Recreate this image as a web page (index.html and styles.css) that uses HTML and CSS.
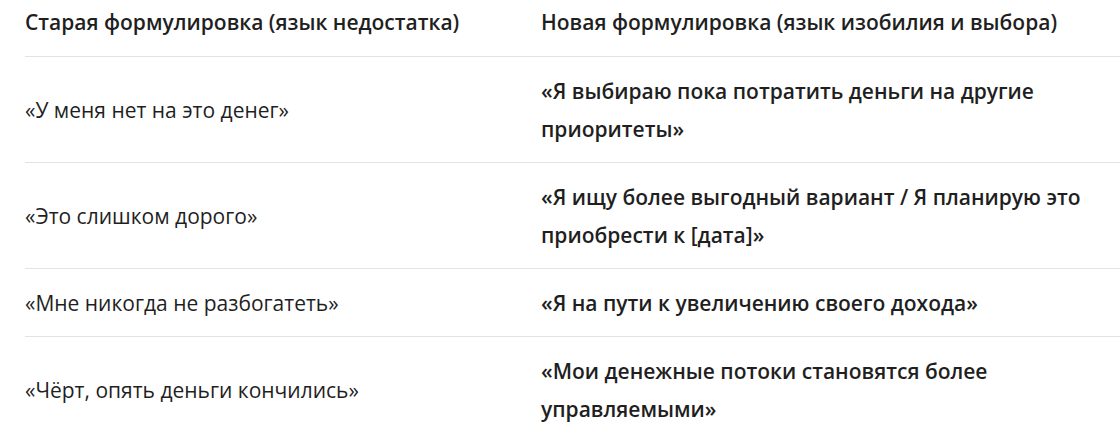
FILE: index.html
```html
<!DOCTYPE html>
<html lang="ru">
<head>
<meta charset="utf-8">
<title>Формулировки</title>
<link rel="stylesheet" href="styles.css">
</head>
<body>
<div class="wrap">
  <table class="phrases">
    <thead>
      <tr>
        <th class="col-old">Старая формулировка (язык недостатка)</th>
        <th class="col-new">Новая формулировка (язык изобилия и выбора)</th>
      </tr>
    </thead>
    <tbody>
      <tr>
        <td class="col-old">«У меня нет на это денег»</td>
        <td class="col-new">«Я выбираю пока потратить деньги на другие приоритеты»</td>
      </tr>
      <tr>
        <td class="col-old">«Это слишком дорого»</td>
        <td class="col-new">«Я ищу более выгодный вариант / Я планирую это приобрести к [дата]»</td>
      </tr>
      <tr>
        <td class="col-old">«Мне никогда не разбогатеть»</td>
        <td class="col-new">«Я на пути к увеличению своего дохода»</td>
      </tr>
      <tr>
        <td class="col-old">«Чёрт, опять деньги кончились»</td>
        <td class="col-new">«Мои денежные потоки становятся более управляемыми»</td>
      </tr>
    </tbody>
  </table>
</div>
</body>
</html>
```

FILE: styles.css
```css
html, body {
  margin: 0;
  padding: 0;
  background: #ffffff;
}

body {
  font-family: "Open Sans", "Noto Sans", "DejaVu Sans", sans-serif;
  font-size: 21px;
  color: #1f1f1f;
}

.wrap {
  padding-left: 25px;
}

.phrases {
  width: 1095px;
  border-collapse: collapse;
  table-layout: fixed;
}

.phrases th,
.phrases td {
  text-align: left;
  vertical-align: middle;
  line-height: 38px;
  border-bottom: 1px solid #e3e3e3;
}

.phrases th {
  font-weight: 600;
  padding: 3px 0 15px;
}

.phrases td {
  padding: 15px 0 14px;
}

.col-old {
  width: 516px;
  font-weight: 400;
}

.phrases td.col-new {
  font-weight: 600;
}
```
